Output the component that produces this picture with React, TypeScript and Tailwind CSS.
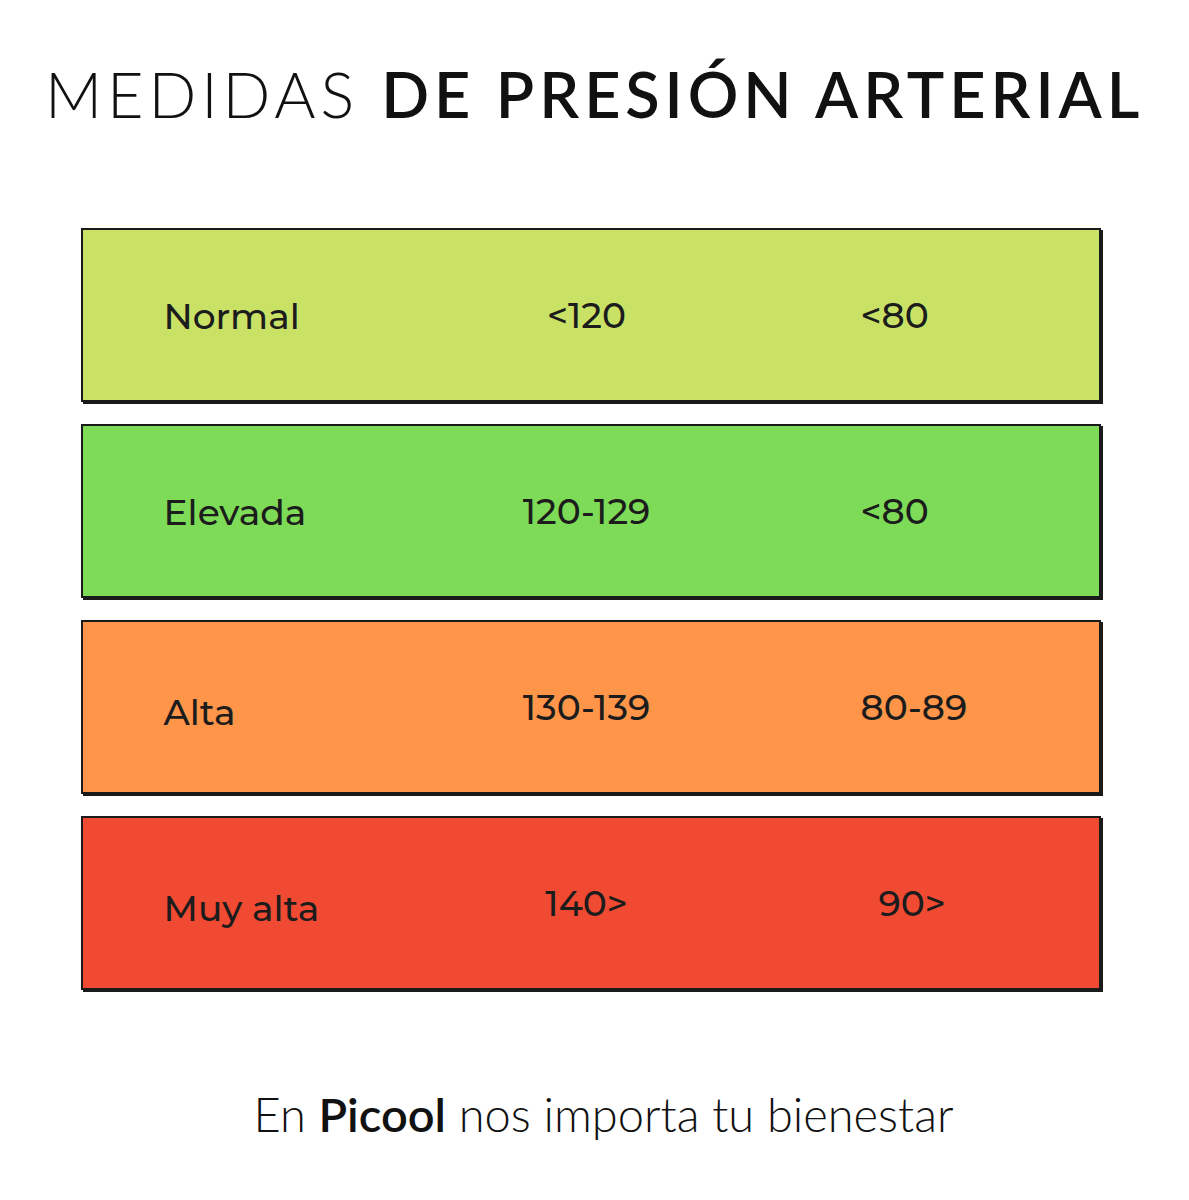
import React from 'react'

type Row = {
    label: string;
    sys: string;
    dia: string;
    bg: string;
    labelPad: string;
    diaPad: string;
}

const rows: Row[] = [
    { label: 'Normal', sys: '<120', dia: '<80', bg: 'bg-[#c9e266]', labelPad: 'pt-[2px]', diaPad: 'pl-[174px]' },
    { label: 'Elevada', sys: '120-129', dia: '<80', bg: 'bg-[#7ddb57]', labelPad: 'pt-[2px]', diaPad: 'pl-[174px]' },
    { label: 'Alta', sys: '130-139', dia: '80-89', bg: 'bg-[#fe9549]', labelPad: 'pt-[10px]', diaPad: 'pl-[174px]' },
    { label: 'Muy alta', sys: '140>', dia: '90>', bg: 'bg-[#f04a33]', labelPad: 'pt-[10px]', diaPad: 'pl-[192px]' },
]

const App = () => {
    return (
        <div className="w-[1189px] h-[1200px] bg-white flex flex-col items-center text-[#111]">
            {/* Titulo */}
            <h1 className="mt-[56px] h-[76px] text-[63px] leading-[76px] tracking-[0.078em] font-['Lato','Liberation_Sans',sans-serif] whitespace-nowrap">
                <span className="font-light">MEDIDAS </span>
                <span className="font-semibold">DE PRESIÓN ARTERIAL</span>
            </h1>

            <div className="mt-[96px] w-[1020px] -ml-[8px] flex flex-col gap-[22px] font-['Montserrat','Noto_Sans',sans-serif] text-[#1c1c1c]">
                {rows.map((r) => (
                    <div
                        key={r.label}
                        className={`${r.bg} h-[174px] border-2 border-[#1a1a1a] shadow-[2px_2px_0_#1a1a1a] grid grid-cols-[404px_200px_1fr] items-center text-[36px] font-medium`}
                    >
                        <span className={`pl-[81px] ${r.labelPad}`}>{r.label}</span>
                        <span className="text-center">{r.sys}</span>
                        <span className={r.diaPad}>{r.dia}</span>
                    </div>
                ))}
            </div>

            {/* Pie */}
            <p className="mt-[94px] ml-[18px] text-[47px] leading-[60px] font-['Lato','Liberation_Sans',sans-serif] font-light whitespace-nowrap">
                En <span className="font-semibold">Picool</span> nos importa tu bienestar
            </p>
        </div>
    )
}

export default App
